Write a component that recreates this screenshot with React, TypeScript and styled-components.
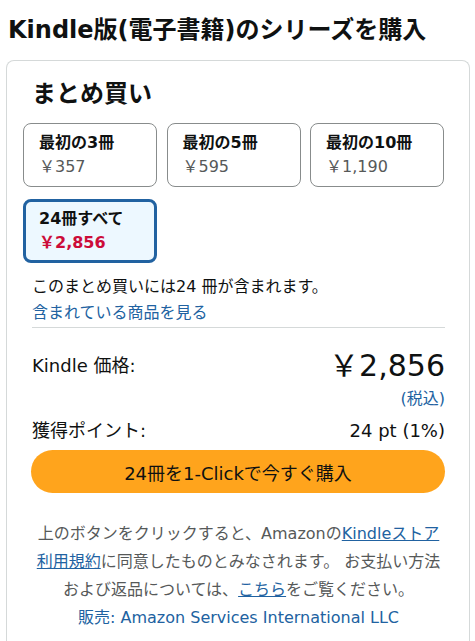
import styled, { createGlobalStyle } from "styled-components";

const GlobalStyle = createGlobalStyle`
  html, body {
    margin: 0;
    padding: 0;
    background: #fff;
    color: #0f1111;
    font-family: "DejaVu Sans", "Noto Sans CJK JP", sans-serif;
  }
`;

const options = [
  { label: "最初の3冊", price: "￥357" },
  { label: "最初の5冊", price: "￥595" },
  { label: "最初の10冊", price: "￥1,190" },
  { label: "24冊すべて", price: "￥2,856", selected: true },
];

const App = () => {
  return (
    <Page>
      <GlobalStyle />
      <Title>Kindle版(電子書籍)のシリーズを購入</Title>
      <Card>
        <Heading>まとめ買い</Heading>
        <Options>
          {options.map((o) => (
            <Option key={o.label} $selected={!!o.selected}>
              <OptionLabel>{o.label}</OptionLabel>
              <OptionPrice $selected={!!o.selected}>{o.price}</OptionPrice>
            </Option>
          ))}
        </Options>
        <Note>このまとめ買いには24 冊が含まれます。</Note>
        <Link href="#">含まれている商品を見る</Link>
        <Divider />
        <PriceRow>
          <RowLabel>Kindle 価格:</RowLabel>
          <BigPrice>￥2,856</BigPrice>
        </PriceRow>
        <TaxNote>(税込)</TaxNote>
        <PointRow>
          <RowLabel>獲得ポイント:</RowLabel>
          <RowValue>24 pt (1%)</RowValue>
        </PointRow>
        <BuyButton>24冊を1-Clickで今すぐ購入</BuyButton>
        <Legal>
          上のボタンをクリックすると、Amazonの
          <Underlined href="#">Kindleストア利用規約</Underlined>
          に同意したものとみなされます。 お支払い方法および返品については、
          <Underlined href="#">こちら</Underlined>
          をご覧ください。
        </Legal>
        <Seller>販売: Amazon Services International LLC</Seller>
      </Card>
    </Page>
  );
};

export default App;

const Page = styled.div`
  height: 100vh;
  box-sizing: border-box;
  overflow: hidden;
  padding: 13px 5px 0 6px;
  display: flex;
  flex-direction: column;
`;

const Title = styled.h1`
  margin: 0 0 13px 2px;
  font-size: 24px;
  font-weight: 700;
  line-height: 34px;
  white-space: nowrap;
`;

const Card = styled.div`
  flex: 1;
  border: 1px solid #d5d9d9;
  border-bottom: none;
  border-radius: 8px 8px 0 0;
  padding: 16px 24px 0 25px;
`;

const Heading = styled.h2`
  margin: 0 0 12px;
  font-size: 24px;
  font-weight: 700;
  line-height: 34px;
`;

const Options = styled.div`
  display: grid;
  grid-template-columns: repeat(3, 134px);
  column-gap: 9.5px;
  row-gap: 12px;
  margin-left: -9px;
`;

const Option = styled.div<{ $selected: boolean }>`
  box-sizing: border-box;
  height: 64px;
  border-radius: 8px;
  border: ${(p) => (p.$selected ? "3px solid #2162a1" : "1px solid #888c8c")};
  background: ${(p) => (p.$selected ? "#edf8ff" : "#fff")};
  padding: ${(p) => (p.$selected ? "5px 13px" : "7px 15px")};
  display: flex;
  flex-direction: column;
  white-space: nowrap;
`;

const OptionLabel = styled.div`
  font-size: 16px;
  font-weight: 700;
  line-height: 24px;
`;

const OptionPrice = styled.div<{ $selected: boolean }>`
  font-size: 16px;
  line-height: 24px;
  color: ${(p) => (p.$selected ? "#cc0c39" : "#565959")};
  font-weight: ${(p) => (p.$selected ? 700 : 400)};
`;

const Note = styled.div`
  margin-top: 11px;
  font-size: 16px;
  line-height: 26px;
`;

const Link = styled.a`
  display: block;
  font-size: 16px;
  line-height: 26px;
  color: #2162a1;
  text-decoration: none;
`;

const Divider = styled.hr`
  margin: 1px 0 0;
  border: none;
  border-top: 1px solid #d5d9d9;
`;

const PriceRow = styled.div`
  display: flex;
  justify-content: space-between;
  align-items: center;
  margin-top: 18px;
`;

const RowLabel = styled.div`
  font-size: 18px;
  line-height: 26px;
`;

const BigPrice = styled.div`
  font-size: 30px;
  line-height: 40px;
`;

const TaxNote = styled.div`
  text-align: right;
  font-size: 16px;
  line-height: 22px;
  color: #2162a1;
  margin-top: 2px;
`;

const PointRow = styled.div`
  display: flex;
  justify-content: space-between;
  margin-top: 8px;
`;

const RowValue = styled.div`
  font-size: 18px;
  line-height: 26px;
`;

const BuyButton = styled.button`
  display: block;
  box-sizing: border-box;
  width: calc(100% + 1px);
  margin: 6px 0 0 -1px;
  height: 43px;
  border: none;
  border-radius: 22px;
  background: #ffa41c;
  color: #0f1111;
  font-family: inherit;
  font-size: 18px;
  cursor: pointer;
`;

const Legal = styled.p`
  margin: 27px 0 0;
  text-align: center;
  font-size: 16px;
  line-height: 28px;
  color: #565959;
`;

const Underlined = styled.a`
  color: #2162a1;
  text-decoration: underline;
`;

const Seller = styled.div`
  text-align: center;
  font-size: 16px;
  line-height: 28px;
  color: #2162a1;
`;
